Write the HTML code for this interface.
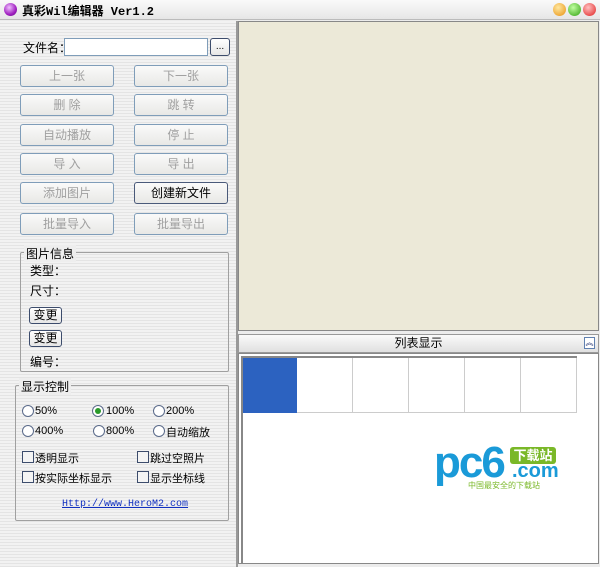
<!DOCTYPE html><html><head><meta charset="utf-8"><style>
*{margin:0;padding:0;box-sizing:border-box}
body{width:600px;height:567px;position:relative;overflow:hidden;font-family:"Liberation Sans","Noto Sans CJK SC",sans-serif;font-size:12px;background:#ececec}
.a{position:absolute}
.stripe{background:repeating-linear-gradient(#f2f2f2 0 2px,#e4e4e4 2px 3px)}
.btn{position:absolute;width:94px;height:22px;border:1px solid #7f9db9;border-radius:3px;background:linear-gradient(#fafafa,#e8e8e6);color:#a0a0a0;text-align:center;line-height:20px;font-size:12px}
.btn.on{color:#000;border-color:#4a5a7a}
.grp{position:absolute;border:1px solid #a0a0a0;border-radius:2px}
.lg{position:absolute;top:-8px;left:3px;background:#eee;padding:0 2px;font-size:12px}
.rb{position:absolute;width:12px;height:12px;border:1px solid #5a6a8a;border-radius:50%;background:#fff}
.cb{position:absolute;width:12px;height:12px;border:1px solid #3c4c6c;background:#f4f4f4}
.t{position:absolute;font-size:11px;white-space:nowrap}
.sb{position:absolute;width:33px;height:17px;border:1px solid #3c4c6c;border-radius:3px;background:linear-gradient(#fff,#e6e6e6);text-align:center;line-height:15px;font-size:12px}
</style></head><body>
<div class="a" style="left:0;top:0;width:600px;height:20px;background:linear-gradient(#fafafa,#e6e6e6);border-bottom:1px solid #bbb"></div>
<div class="a" style="left:4px;top:3px;width:13px;height:13px;border-radius:50%;background:radial-gradient(circle at 40% 35%,#f0c0ff,#a020c0 60%,#601080)"></div>
<div class="a" style="left:22px;top:2px;font-weight:bold;font-size:12px;font-family:'Liberation Mono','Noto Sans CJK SC',monospace">真彩Wil编辑器 Ver1.2</div>
<div class="a" style="left:553px;top:3px;width:13px;height:13px;border-radius:50%;background:radial-gradient(circle at 40% 35%,#ffe8a0,#e89010)"></div>
<div class="a" style="left:568px;top:3px;width:13px;height:13px;border-radius:50%;background:radial-gradient(circle at 40% 35%,#c0ffa0,#30a010)"></div>
<div class="a" style="left:583px;top:3px;width:13px;height:13px;border-radius:50%;background:radial-gradient(circle at 40% 35%,#ffc0c0,#e02020)"></div>
<div class="a stripe" style="left:0;top:21px;width:236px;height:546px"></div>
<div class="a" style="left:236px;top:21px;width:2px;height:546px;background:#999"></div>
<div class="a" style="left:238px;top:21px;width:361px;height:310px;background:#ece9d8;border:1px solid #888"></div>
<div class="a" style="left:23px;top:39px">文件名：</div>
<div class="a" style="left:64px;top:38px;width:144px;height:18px;border:1px solid #7f9db9;background:#fff"></div>
<div class="sb" style="left:210px;top:38px;width:20px;height:18px;font-size:10px">...</div>
<div class="btn" style="left:20px;top:65px">上一张</div><div class="btn" style="left:134px;top:65px">下一张</div>
<div class="btn" style="left:20px;top:94px">删 除</div><div class="btn" style="left:134px;top:94px">跳 转</div>
<div class="btn" style="left:20px;top:124px">自动播放</div><div class="btn" style="left:134px;top:124px">停 止</div>
<div class="btn" style="left:20px;top:153px">导 入</div><div class="btn" style="left:134px;top:153px">导 出</div>
<div class="btn" style="left:20px;top:182px">添加图片</div><div class="btn on" style="left:134px;top:182px">创建新文件</div>
<div class="btn" style="left:20px;top:213px">批量导入</div><div class="btn" style="left:134px;top:213px">批量导出</div>
<div class="grp" style="left:20px;top:252px;width:209px;height:120px"><div class="lg">图片信息</div></div>
<div class="a" style="left:30px;top:262px">类型：</div>
<div class="a" style="left:30px;top:282px">尺寸：</div>
<div class="sb" style="left:29px;top:307px">变更</div>
<div class="sb" style="left:29px;top:330px">变更</div>
<div class="a" style="left:30px;top:353px">编号：</div>
<div class="grp" style="left:15px;top:385px;width:214px;height:136px"><div class="lg">显示控制</div></div>
<div class="rb" style="left:22px;top:405px"></div><div class="t" style="left:35px;top:405px">50%</div>
<div class="rb" style="left:92px;top:405px"><div style="width:6px;height:6px;border-radius:50%;background:#2a9a2a;margin:2px"></div></div><div class="t" style="left:106px;top:405px">100%</div>
<div class="rb" style="left:153px;top:405px"></div><div class="t" style="left:166px;top:405px">200%</div>
<div class="rb" style="left:22px;top:425px"></div><div class="t" style="left:35px;top:425px">400%</div>
<div class="rb" style="left:93px;top:425px"></div><div class="t" style="left:106px;top:425px">800%</div>
<div class="rb" style="left:153px;top:425px"></div><div class="t" style="left:166px;top:424px">自动缩放</div>
<div class="cb" style="left:22px;top:451px"></div><div class="t" style="left:35px;top:450px">透明显示</div>
<div class="cb" style="left:137px;top:451px"></div><div class="t" style="left:150px;top:450px">跳过空照片</div>
<div class="cb" style="left:22px;top:471px"></div><div class="t" style="left:35px;top:470px">按实际坐标显示</div>
<div class="cb" style="left:137px;top:471px"></div><div class="t" style="left:150px;top:470px">显示坐标线</div>
<div class="a" style="left:62px;top:499px;font-size:10px;color:#1030c0;text-decoration:underline;font-family:'Liberation Mono',monospace">Http://www.HeroM2.com</div>
<div class="a" style="left:238px;top:334px;width:361px;height:19px;background:linear-gradient(#fafafa,#e0e0e0);border:1px solid #999;text-align:center;line-height:17px">列表显示</div>
<div class="a" style="left:584px;top:337px;width:11px;height:12px;border:1px solid #6080b0;background:#fff;font-size:8px;line-height:10px;text-align:center;color:#203070">︽</div>
<div class="a" style="left:238px;top:353px;width:361px;height:211px;background:#fff;border:1px solid #888"></div>
<div class="a" style="left:241px;top:356px;width:336px;height:57px;border-top:2px solid #888;border-left:2px solid #888"></div>
<div class="a" style="left:241px;top:358px;width:56px;height:55px;background:#2c62c0"></div>
<div class="a" style="left:297px;top:358px;width:280px;height:55px;border-bottom:1px solid #ccc;background:repeating-linear-gradient(90deg,#fff 0 55px,#ccc 55px 56px)"></div>
<div class="a" style="left:241px;top:358px;width:2px;height:205px;background:#888"></div>
<div class="a" style="left:434px;top:441px;font-size:44px;font-weight:bold;color:#1a9ad8;letter-spacing:-2px;line-height:44px">pc6</div>
<div class="a" style="left:510px;top:447px;width:46px;height:17px;background:#7ab828;border-radius:3px;color:#fff;font-size:13px;font-weight:bold;text-align:center;line-height:17px">下载站</div>
<div class="a" style="left:512px;top:460px;font-size:20px;font-weight:bold;color:#1a9ad8">.com</div>
<div class="a" style="left:468px;top:480px;font-size:8px;color:#7ab828">中国最安全的下载站</div>
</body></html>
